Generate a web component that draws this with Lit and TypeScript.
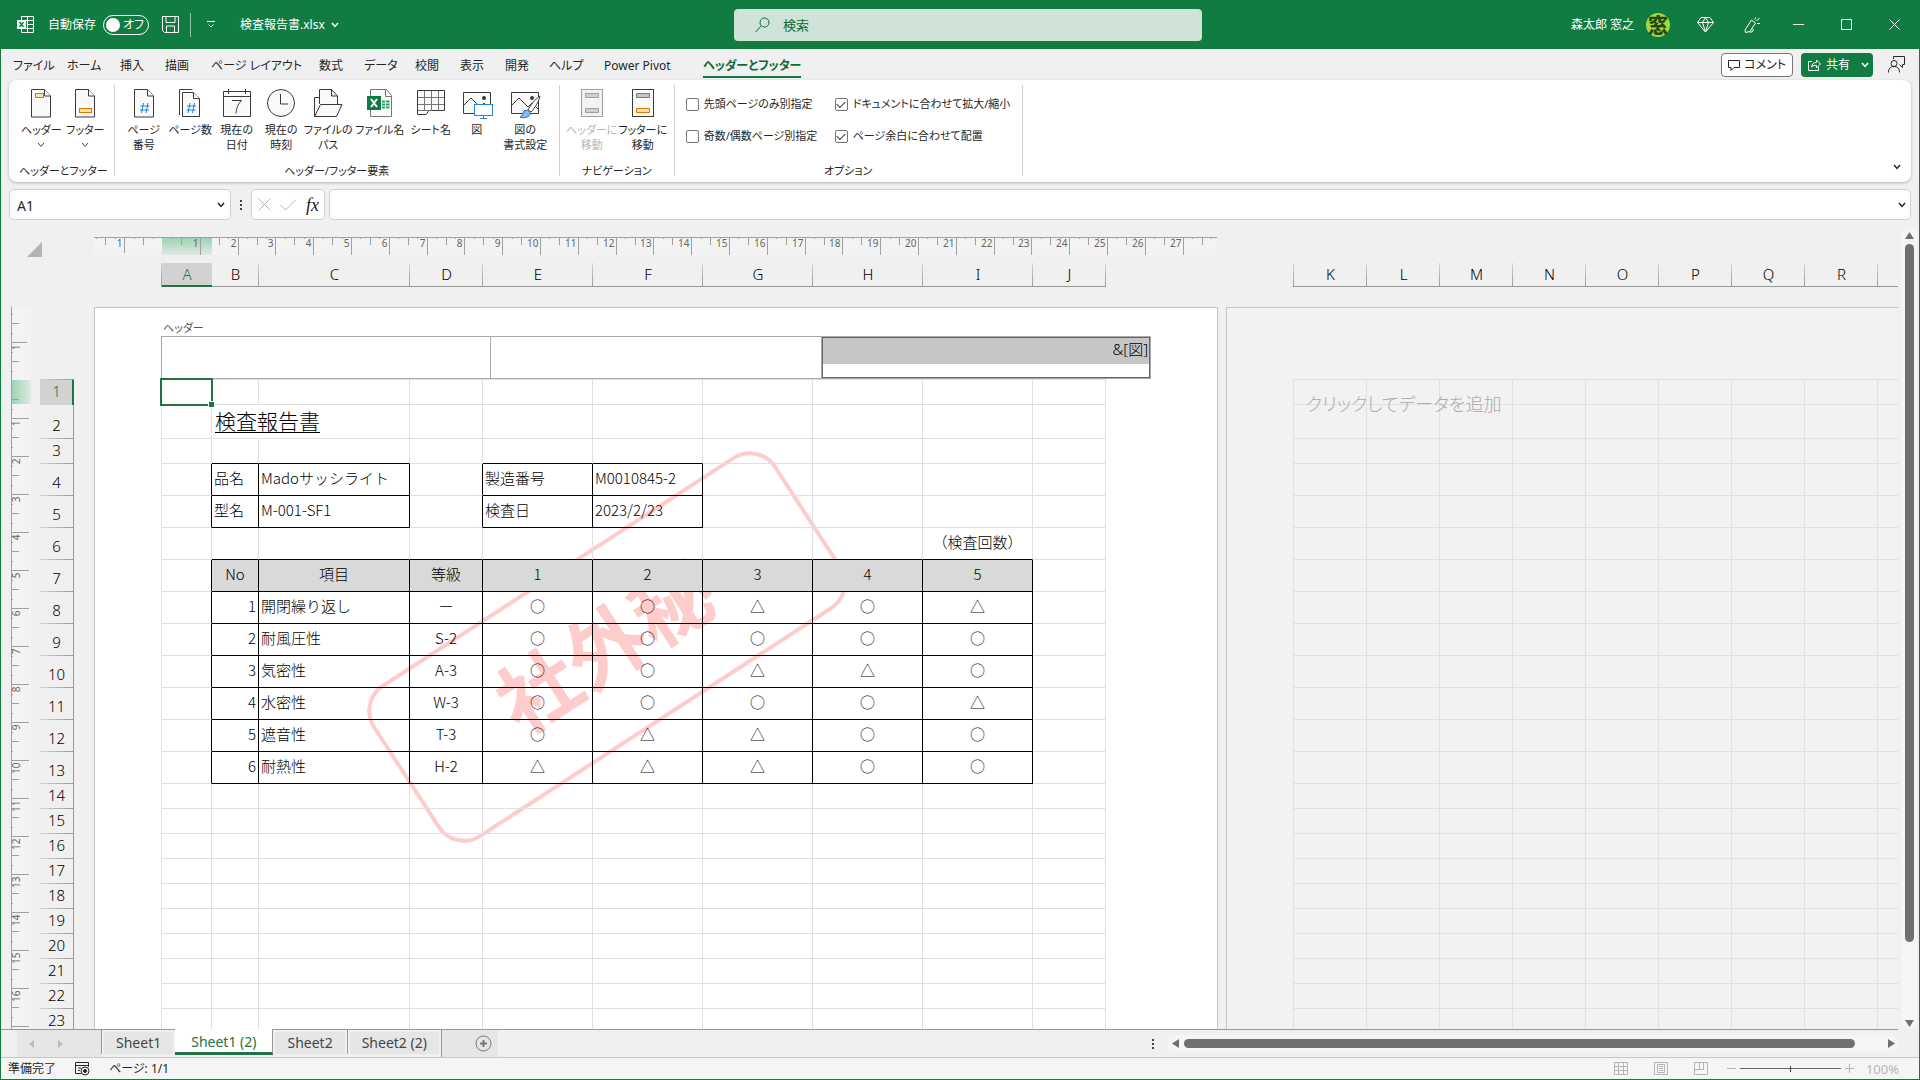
import { LitElement, html, svg, css, nothing } from "lit";
import { customElement, property } from "lit/decorators.js";
import { classMap } from "lit/directives/class-map.js";

type Cell = { text: string; align?: "center" | "right"; title?: boolean };

const COLS: [string, number][] = [
  ["A", 50], ["B", 47], ["C", 151], ["D", 73], ["E", 110],
  ["F", 110], ["G", 110], ["H", 110], ["I", 110], ["J", 73],
];
const NEXT_COLS = ["K", "L", "M", "N", "O", "P", "Q", "R", "S"];
const ROWS = Array.from({ length: 23 }, (_, i) => i + 1);
const rowClass = (r: number) => (r === 2 ? "r34" : r >= 4 && r <= 13 ? "r32" : "r25");

const CELLS: Record<string, Cell> = {
  B2: { text: "検査報告書", title: true },
  B4: { text: "品名" }, C4: { text: "Madoサッシライト" },
  B5: { text: "型名" }, C5: { text: "M-001-SF1" },
  E4: { text: "製造番号" }, F4: { text: "M0010845-2" },
  E5: { text: "検査日" }, F5: { text: "2023/2/23" },
  I6: { text: "（検査回数）", align: "center" },
};
["No", "項目", "等級", "1", "2", "3", "4", "5"].forEach((text, i) => {
  CELLS["BCDEFGHI"[i] + "7"] = { text, align: "center" };
});
const RESULTS: [string, string, string][] = [
  ["開閉繰り返し", "ー", "○○△○△"],
  ["耐風圧性", "S-2", "○○○○○"],
  ["気密性", "A-3", "○○△△○"],
  ["水密性", "W-3", "○○○○△"],
  ["遮音性", "T-3", "○△△○○"],
  ["耐熱性", "H-2", "△△△○○"],
];
RESULTS.forEach(([name, grade, marks], i) => {
  const r = 8 + i;
  CELLS["B" + r] = { text: String(i + 1), align: "right" };
  CELLS["C" + r] = { text: name };
  CELLS["D" + r] = { text: grade, align: "center" };
  [...marks].forEach((m, j) => (CELLS["EFGHI"[j] + r] = { text: m, align: "center" }));
});

const boxed = (c: number, r: number) =>
  ((r === 4 || r === 5) && (c === 1 || c === 2 || c === 4 || c === 5)) ||
  (r >= 7 && r <= 13 && c >= 1 && c <= 8);

const chevron = html`<svg class="chev" width="8" height="6" viewBox="0 0 8 6"><path d="M1 1l3 3.4L7 1" /></svg>`;

const page = svg`<path d="M1.5 .5h13l6 6.500v21h-19z" fill="#fafafa" stroke="#3b3a39"/><path d="M14.500 .5v6.500h6" fill="#fff" stroke="#3b3a39"/>`;
const picture = svg`<path d="M1.500 3.500h27v21h-27z" fill="#fafafa" stroke="#3b3a39"/><path d="M2 16l7-7 9 9 4-4 6 6" fill="none" stroke="#3b3a39"/><circle cx="22" cy="9" r="2" fill="#3b3a39"/>`;

const ICONS: Record<string, unknown> = {
  header: svg`<g transform="translate(4 0)">${page}<rect x="5.500" y="4.500" width="8" height="4" fill="#fce4a8" stroke="#e07400"/></g>`,
  footer: svg`<g transform="translate(4 0)">${page}<rect x="5.500" y="19.500" width="12" height="4" fill="#fce4a8" stroke="#e07400"/></g>`,
  pageNumber: svg`<g transform="translate(4 0)">${page}<path d="M10.500 14l-2 10M15 14l-2 10M7.500 17h9M7 21h9" stroke="#1e88d2" fill="none"/></g>`,
  pageCount: svg`<path d="M4.500 26V.5h13" fill="none" stroke="#3b3a39"/><path d="M7.500 3.500h11l6 6v18h-17z" fill="#fafafa" stroke="#3b3a39"/><path d="M18.500 3.500v6h6" fill="#fff" stroke="#3b3a39"/><path d="M15 14l-2 10M19.500 14l-2 10M12 17h9M11.500 21h9" stroke="#1e88d2" fill="none"/>`,
  date: svg`<path d="M1.500 2.500h27v25h-27zM1.500 7.500h27M6.500 0v5M23.500 0v5" fill="#fafafa" stroke="#3b3a39"/><path d="M10 11.500h9.500c-4 4-5 8-5.500 13" fill="none" stroke="#3b3a39"/>`,
  time: svg`<circle cx="15" cy="14" r="13.500" fill="#fafafa" stroke="#3b3a39"/><path d="M14.500 5v10H22" fill="none" stroke="#3b3a39"/>`,
  path: svg`<path d="M6.500 15V.5h12l6 6.500v9" fill="#fafafa" stroke="#3b3a39"/><path d="M18.500 .5V7h6" fill="none" stroke="#3b3a39"/><path d="M6 8.500H1.500v19l6-12h21.500l-5.500 12h-22" fill="#fafafa" stroke="#3b3a39"/>`,
  fileName: svg`<path d="M5.500 .5h16l5 6v21h-21z" fill="#fafafa" stroke="#797774"/><path d="M20.500 .5v7h6" fill="none" stroke="#797774"/><rect x="2" y="7" width="14" height="14" fill="#107c41"/><path d="M6 10l6 8M12 10l-6 8" stroke="#fff" stroke-width="2"/><path d="M17 12.500h3M21 12.500h3.500M17 15.500h3M21 15.500h3.500M17 18.500h3M21 18.500h3.500" stroke="#21a366" stroke-width="2"/>`,
  sheetName: svg`<path d="M1.500 1.500h27v20H13l-3 4h-8.500z" fill="#fafafa" stroke="#3b3a39"/><path d="M8.500 2v20M15.500 2v20M22.500 2v20M2 8.500h26M2 15.500h26M2 21.500h12" stroke="#797774"/>`,
  picture: svg`${picture}<rect x="12.500" y="15.500" width="18" height="11" fill="#fff" stroke="#1e88d2"/><path d="M21.500 27v2.500M18 29.500h7" stroke="#1e88d2"/>`,
  formatPicture: svg`${picture}<path d="M30 7c-5 3-10 10-12 14l3 2c4-4 8-11 9-16z" fill="#fff" stroke="#3b3a39"/><path d="M10 28c3 0 2-5 5-6.500 3-1 6 1.500 5 4-1.500 3-6 4-10 2.500z" fill="#83beec" stroke="#1e6fb8"/>`,
  goHeader: svg`<rect x="4.500" y=".5" width="21" height="27" fill="#f3f3f3" stroke="#a19f9d"/><path d="M8.500 4.500h13v4h-13zM8.500 19.500h13v4h-13z" fill="#d2d0ce" stroke="#a19f9d"/>`,
  goFooter: svg`<rect x="4.500" y=".5" width="21" height="27" fill="#fafafa" stroke="#3b3a39"/><path d="M8.500 4.500h13v4h-13z" fill="#c8c6c4" stroke="#797774"/><path d="M8.500 19.500h13v4h-13z" fill="#fce4a8" stroke="#e07400"/>`,
};

@customElement("ribbon-button")
class RibbonButton extends LitElement {
  @property() icon = "";
  @property() label = "";
  @property({ type: Boolean }) menu = false;
  @property({ type: Boolean }) disabled = false;

  static styles = css`
    :host { display: block; flex: none; }
    .btn {
      width: 100%; padding: 0; border: 0; background: none; color: #262626;
      font: inherit; font-feature-settings: inherit; line-height: 15px;
      display: flex; flex-direction: column; align-items: center;
    }
    .btn:disabled { color: #b5b5b5; }
    .icon { width: 32px; height: 32px; margin-bottom: 1px; }
    .label { white-space: pre; text-align: center; }
    .chev { margin-top: 5px; fill: none; stroke: #444; }
  `;

  render() {
    return html`<button class="btn" ?disabled=${this.disabled}>
      <svg class="icon" viewBox="-1 0 32 32">${ICONS[this.icon]}</svg>
      <span class="label">${this.label}</span>
      ${this.menu ? chevron : nothing}
    </button>`;
  }
}

@customElement("cm-ruler")
class CmRuler extends LitElement {
  @property({ type: Boolean, reflect: true }) vertical = false;
  @property({ type: Number }) length = 0;
  @property({ type: Number }) zero = 0;
  @property({ type: Number }) unit = 378;
  @property({ type: Number }) selected = 0;

  static styles = css`
    :host { display: block; flex: none; }
    .ruler { display: block; overflow: visible; }
    .num { font: 10px "Noto Sans", sans-serif; fill: #666; text-anchor: end; }
    .tick { stroke: #a0a0a0; shape-rendering: crispEdges; }
  `;

  render() {
    const v = this.vertical;
    const line = (p: number, a: number, b: number) =>
      v ? svg`<path class="tick" d="M${a} ${p}H${b}"/>` : svg`<path class="tick" d="M${p} ${a}V${b}"/>`;
    const marks: unknown[] = [];
    for (let q = -8; q < 120; q++) {
      const p = this.zero + Math.round((q * this.unit) / 40) + 0.5;
      if (p < 1 || p > this.length || q === 0) continue;
      if (q % 4 === 0) {
        const n = Math.abs(q / 4);
        marks.push(line(p, 1, q < 0 ? 16 : 18));
        if (v && p + 14 > this.length) continue;
        marks.push(v
          ? svg`<text class="num" transform="translate(9 ${p + 2}) rotate(-90)">${n}</text>`
          : svg`<text class="num" x=${p - 2} y="10">${n}</text>`);
      } else if (q % 2 === 0) marks.push(line(p, 1, 8));
      else marks.push(line(p, 1, 2));
    }
    const w = v ? 20 : this.length;
    const h = v ? this.length : 18;
    return html`<svg class="ruler" width=${w} height=${h} viewBox="0 0 ${w} ${h}">
      <defs><linearGradient id="sel" x2=${v ? 1 : 0} y2=${v ? 0 : 1}>
        <stop offset="0" stop-color="#97d3b1"/><stop offset="1" stop-color="#e2e8e4"/>
      </linearGradient></defs>
      <rect width=${w} height=${h} fill="#f3f3f3"/>
      ${v
        ? svg`<rect y=${this.zero} width="20" height=${this.selected} fill="url(#sel)"/><path class="tick" d="M.5 0V${h}"/>`
        : svg`<rect x=${this.zero} width=${this.selected} height="18" fill="url(#sel)"/><path class="tick" d="M0 .5H${w}"/>`}
      ${marks}
    </svg>`;
  }
}

const TABS: [string, number][] = [
  ["ファイル", 54], ["ホーム", 53], ["挿入", 45], ["描画", 46], ["ページ レイアウト", 108],
  ["数式", 45], ["データ", 51], ["校閲", 45], ["表示", 45], ["開発", 44], ["ヘルプ", 55],
  ["Power Pivot", 99], ["ヘッダーとフッター", 92],
];

type Tool = { icon: string; label: string; w: number; menu?: boolean; disabled?: boolean };
const GROUPS: { name: string; tools: Tool[] }[] = [
  { name: "ヘッダーとフッター", tools: [
    { icon: "header", label: "ヘッダー", w: 44, menu: true },
    { icon: "footer", label: "フッター", w: 44, menu: true },
  ] },
  { name: "ヘッダー/フッター要素", tools: [
    { icon: "pageNumber", label: "ページ\n番号", w: 46 },
    { icon: "pageCount", label: "ページ数", w: 47 },
    { icon: "date", label: "現在の\n日付", w: 46 },
    { icon: "time", label: "現在の\n時刻", w: 43 },
    { icon: "path", label: "ファイルの\nパス", w: 51 },
    { icon: "fileName", label: "ファイル名", w: 52 },
    { icon: "sheetName", label: "シート名", w: 50 },
    { icon: "picture", label: "図", w: 42 },
    { icon: "formatPicture", label: "図の\n書式設定", w: 55 },
  ] },
  { name: "ナビゲーション", tools: [
    { icon: "goHeader", label: "ヘッダーに\n移動", w: 52, disabled: true },
    { icon: "goFooter", label: "フッターに\n移動", w: 50 },
  ] },
];

const OPTIONS: [string, boolean][] = [
  ["先頭ページのみ別指定", false],
  ["ドキュメントに合わせて拡大/縮小", true],
  ["奇数/偶数ページ別指定", false],
  ["ページ余白に合わせて配置", true],
];

const SHEETS = ["Sheet1", "Sheet1 (2)", "Sheet2", "Sheet2 (2)"];

@customElement("app-root")
class AppRoot extends LitElement {
  static styles = css`
    * { box-sizing: border-box; }
    :host {
      display: flex; flex-direction: column; height: 100vh; box-sizing: border-box;
      border: solid #107c41; border-width: 0 1px 1px; background: #f0f0f0; overflow: hidden;
      font: 12px/16px "Noto Sans", "Noto Sans CJK JP", sans-serif; color: #262626;
      font-feature-settings: "palt"; white-space: nowrap;
    }
    button { font: inherit; font-feature-settings: inherit; color: inherit; border: 0; background: none; padding: 0; }
    input { font: inherit; color: inherit; }
    svg { display: block; flex: none; fill: none; stroke: currentColor; }
    .chev { stroke-width: 1.5; }

    .title { height: 49px; flex: none; padding-left: 16px; background: #107c41; color: #fff; display: grid; grid-template-columns: 1fr 468px 1fr; align-items: center; }
    .title-left { display: flex; align-items: center; }
    .autosave { display: flex; align-items: center; gap: 7px; margin: 0 13px 0 14px; }
    .switch { width: 46px; height: 20px; border: 1px solid #fff; border-radius: 10px; padding: 0 4px 0 2px; display: flex; align-items: center; justify-content: space-between; }
    .knob { width: 14px; height: 14px; border-radius: 50%; background: #fff; }
    .vsep { width: 1px; height: 24px; background: #8ec5a5; margin: 0 16px 0 11px; }
    .file { display: flex; align-items: center; gap: 6px; margin-left: 25px; }
    .search { height: 32px; border-radius: 4px; background: #cfe3d8; color: #0e6b38; display: flex; align-items: center; gap: 13px; padding-left: 21px; }
    .search input { flex: 1; min-width: 0; border: 0; outline: 0; background: none; font-size: 13px; padding: 0; }
    .search input::placeholder { color: #0e6b38; opacity: 1; }
    .title-right { display: flex; align-items: center; justify-content: flex-end; padding-right: 19px; }
    .user { display: flex; align-items: center; gap: 12px; margin-right: 27px; }
    .avatar { width: 24px; height: 24px; border-radius: 50%; background: #a5d63f; color: #1f4a12; font: 900 20px/23px "Noto Sans CJK JP", sans-serif; text-align: center; }
    .sys { display: flex; align-items: center; gap: 30px; }
    .win { display: flex; align-items: center; gap: 37px; margin-left: 32px; }

    .tabs { height: 31px; flex: none; display: flex; align-items: center; padding: 0 14px 0 12px; }
    .tab { text-align: left; height: 31px; flex: none; overflow: visible; padding-top: 3px; }
    .tab.on { color: #0e6b38; font-weight: 700; }
    .tab.on span { display: block; width: max-content; padding: 2px 0; border-bottom: 2px solid #107c41; margin-top: 2px; }
    .actions { margin-left: auto; display: flex; align-items: center; gap: 8px; }
    .comment, .share { height: 24px; border-radius: 4px; display: flex; align-items: center; }
    .comment { border: 1px solid #767676; background: #fff; padding: 0 6px; gap: 4px; }
    .share { background: #107c41; color: #fff; padding: 0 4px 0 7px; gap: 5px; }
    .share .chev { margin-left: 6px; }
    .person { margin-left: 7px; }

    .ribbon { flex: none; height: 102px; margin: 0 8px; background: #fff; border-radius: 8px; box-shadow: 0 1px 3px #0004; display: flex; padding: 5px 0; font-size: 11px; position: relative; }
    .group { display: flex; flex-direction: column; justify-content: space-between; align-items: center; border-right: 1px solid #d0d0d0; padding: 4px 6px 0; height: 91px; }
    .group:first-child { padding: 4px 6px 0 10px; }
    .tools { display: flex; }
    .gname { line-height: 16px; margin-bottom: -3px; }
    .opts { display: grid; grid-template-columns: 149px 181px; row-gap: 16px; padding: 7px 0 0 5px; }
    .opt { display: flex; align-items: center; gap: 5px; height: 16px; }
    .opt input { appearance: none; width: 13px; height: 13px; margin: 0; border: 1px solid #767676; border-radius: 2px; background: #fff; display: grid; place-items: center; }
    .opt input:checked::before { content: ""; width: 7px; height: 4px; border: solid #333; border-width: 0 0 1px 1px; transform: rotate(-45deg); margin-top: -2px; }
    .collapse { margin: auto 10px 7px auto; }

    .formula { flex: none; display: flex; align-items: center; height: 31px; margin: 7px 8px 0; }
    .field { height: 31px; background: #fff; border: 1px solid #d0d0d0; border-radius: 4px; display: flex; align-items: center; }
    .field input { flex: 1; min-width: 0; border: 0; outline: 0; background: none; padding: 2px 0 0 7px; font-size: 14px; }
    .name { width: 222px; padding-right: 5px; }
    .dots { margin: 0 9px; fill: #444; stroke: none; }
    .fx { width: 74px; margin-right: 4px; padding: 0 5px 0 6px; justify-content: space-between; color: #b5b5b5; }
    .fxg { font: italic 18px/20px "Liberation Serif", serif; color: #222; }
    .expr { flex: 1; padding-right: 4px; }

    .work { flex: 1; min-height: 0; display: flex; }
    .area { flex: 1; min-width: 0; display: flex; flex-direction: column; overflow: hidden; }
    .rulerow { height: 35px; padding-top: 17px; display: flex; flex: none; }
    .corner { width: 93px; padding: 5px 0 0 26px; flex: none; }
    .colrow { display: flex; flex: none; margin: 8px 0 20px 160px; font-size: 15px; color: #000; font-weight: 300; }
    .cols { display: flex; border-bottom: 1px solid #999; padding-left: 1px; background: linear-gradient(#d5d5d5, #999) left / 1px 100% no-repeat; flex: none; }
    .cols.next { flex: 1; min-width: 0; margin-left: 187px; overflow: hidden; }
    .col { flex: none; height: 23px; line-height: 22px; text-align: center; background: linear-gradient(#d5d5d5, #999) right / 1px 100% no-repeat; }
    .col.sel { background: #d2d2d2; color: #217346; box-shadow: inset 0 -1px #217346, 0 1px #217346; }
    .w73 { width: 73px; }
    .body { flex: 1; min-height: 0; display: flex; overflow: hidden; align-items: flex-start; }
    .vr { margin: 0 9px 0 10px; }
    .rows { flex: none; width: 34px; margin: 72px 20px 0 0; border-right: 1px solid #999; font-size: 15px; color: #000; font-weight: 300; padding: 1px 0 0; background: linear-gradient(90deg, #d5d5d5, #999) top / 100% 1px no-repeat; }
    .row { display: flex; align-items: flex-end; justify-content: center; line-height: 20px; padding-bottom: 4px; background: linear-gradient(90deg, #d5d5d5, #999) bottom / 100% 1px no-repeat; }
    .row.sel { background: #d2d2d2; color: #217346; box-shadow: inset -1px 0 #217346, 1px 0 #217346; }
    .r25 { height: 25px; } .r34 { height: 34px; } .r32 { height: 32px; }

    .page { position: relative; flex: none; background: #fff; border: 1px solid #c6c6c6; border-bottom: 0; padding: 0 66px; color: #000; }
    .hlabel { height: 28px; padding: 12px 0 0 2px; font-size: 11px; line-height: 16px; color: #555; }
    .hbox { display: grid; grid-template-columns: 329px 331px 329px; height: 43px; border: 1px solid #aaa; border-right: 0; position: relative; z-index: 1; }
    .hbox > * { border-right: 1px solid #aaa; }
    .hsel { margin-right: 1px; border: 1px solid #666; outline: 1px solid #aaa; font-size: 15px; font-weight: 300; line-height: 22px; text-align: right; }
    .hsel span { display: block; background: #c6c6c6; padding: 0 1px 4px 0; }
    .stamp { position: absolute; left: 270px; top: 141px; stroke: none; }
    .stamp text { font: 700 80px "Noto Sans CJK JP", sans-serif; fill: #fcc; text-anchor: middle; font-feature-settings: normal; }
    .grid { position: relative; width: 945px; border-collapse: separate; border-spacing: 0; table-layout: fixed; border: solid #e0e0e0; border-width: 1px 0 0 1px; font: 300 15px/20px "Noto Sans CJK JP", sans-serif; font-feature-settings: normal; }
    .grid td { padding: 0 2px 3px; border: solid #e0e0e0; border-width: 0 1px 1px 0; overflow: visible; vertical-align: middle; position: relative; }
    .grid td.br { border-right-color: #000; }
    .grid td.bb { border-bottom-color: #000; }
    .grid td.head { background: #d9d9d9; }
    .grid td.open { border-right-color: transparent; }
    .center { text-align: center; }
    .right { text-align: right; }
    .big { font-size: 21px; line-height: 24px; border-bottom: 1px solid #000; display: inline-block; position: relative; z-index: 1; margin-left: 1px; }
    .cursor { position: absolute; inset: -2px; border: 2px solid #217346; z-index: 2; }
    .cursor::after { content: ""; position: absolute; right: -3px; bottom: -3px; width: 5px; height: 5px; background: #217346; border: solid #fff; border-width: 1px 0 0 1px; box-sizing: content-box; }
    .page2 { position: relative; flex: 1; min-width: 0; margin-left: 8px; border: solid #c6c6c6; border-width: 1px 0 0 1px; background: #f2f2f2; padding: 71px 0 0 66px; overflow: hidden; }
    .page2 .grid { width: 658px; }
    .hint { position: absolute; left: 79px; top: 83px; font-size: 18px; line-height: 26px; color: #aaa; font-weight: 300; }

    .vscroll { flex: none; width: 16px; margin: 7px 2px 0 3px; border-radius: 8px; background: #f5f5f5; display: flex; flex-direction: column; align-items: center; padding: 5px 0 2px; gap: 5px; }
    .vthumb { width: 9px; flex: 0 1 698px; border-radius: 5px; background: #707070; }
    .vscroll svg:last-child { margin-top: auto; }
    .arrow { fill: #707070; stroke: none; }

    .sheets { flex: none; height: 28px; display: flex; border-top: 1px solid #999; margin-right: 21px; font-size: 14px; }
    .nav { width: 84px; margin-left: 16px; background: #e6e6e6; display: flex; align-items: center; gap: 24px; padding-left: 12px; }
    .nav svg { fill: #bbb; stroke: none; }
    .sheet { height: 24px; color: #444; padding: 1px 0 0; border-left: 1px solid #999; }
    .sheet span { display: block; line-height: 22px; background: #e6e6e6; padding: 0 12px; margin: 0 2px; }
    .sheet.on { margin: -1px 0 0; height: 26px; padding-top: 2px; background: #fff; color: #217346; border: solid #999; border-width: 0 1px 3px 0; border-bottom-color: #217346; }
    .sheet.on span { background: none; padding: 0 14px; line-height: 21px; }
    .sheet.after { border-left: 0; }
    .add { width: 57px; background: #e6e6e6; display: grid; place-items: center; padding-left: 28px; color: #777; border-left: 1px solid #999; }
    .hs { margin-left: auto; display: flex; align-items: center; flex: 0 1 755px; }
    .htrack { flex: 1; margin-left: 4px; height: 17px; border-radius: 8px; background: #f5f5f5; display: flex; align-items: center; padding: 0 3px 0 5px; gap: 5px; }
    .hthumb { height: 9px; flex: 0 1 671px; border-radius: 5px; background: #707070; }
    .htrack svg:last-child { margin-left: auto; }

    .status { flex: none; height: 22px; border-top: 1px solid #c6c6c6; background: #f5f5f5; display: flex; align-items: center; padding: 0 20px 0 7px; gap: 19px; }
    .views { margin-left: auto; display: flex; gap: 26px; color: #b5b5b5; }
    .zoom { display: flex; align-items: center; gap: 4px; color: #b5b5b5; }
    .zoom input { appearance: none; width: 101px; height: 16px; margin: 0; background: linear-gradient(#666, #666) center / 100% 1px no-repeat; }
    .zoom input::-webkit-slider-thumb { appearance: none; width: 1px; height: 6px; background: #444; }
    .pct { margin-left: 8px; font-size: 13px; }
  `;

  private cell(r: number, c: number) {
    const id = COLS[c][0] + r;
    const cell = CELLS[id];
    const cls = classMap({
      br: boxed(c, r) || boxed(c + 1, r),
      bb: boxed(c, r) || boxed(c, r + 1),
      head: r === 7 && c >= 1 && c <= 8,
      open: id === "B2",
      center: cell?.align === "center",
      right: cell?.align === "right",
    });
    return html`<td class=${cls}>${cell?.title ? html`<span class="big">${cell.text}</span>` : cell?.text ?? nothing}${id === "A1" ? html`<div class="cursor"></div>` : nothing}</td>`;
  }

  private titleBar() {
    return html`<header class="title">
      <div class="title-left">
        <svg width="17" height="17" viewBox="0 0 17 17"><path d="M4.500 4V.5h12v16h-12V13M10.500 .5v16M4.500 4.500h12M10 8.500h6.500M4.500 12.500h12"/><rect y="4" width="9" height="9" fill="#fff" stroke="none"/><path d="M2.500 6l4 5M6.500 6l-4 5" stroke="#107c41" stroke-width="1.500"/></svg>
        <div class="autosave"><span>自動保存</span><button class="switch" role="switch" aria-checked="false"><span class="knob"></span><span>オフ</span></button></div>
        <svg width="17" height="17" viewBox="0 0 17 17"><path d="M.5 .5h16v16h-14l-2-2zM4 .5v6h9v-6M4.500 16v-6h8v6"/></svg>
        <span class="vsep"></span>
        <svg width="8" height="8" viewBox="0 0 8 8"><path d="M0 .5h8M1.500 3.500L4 6l2.500-2.500"/></svg>
        <button class="file">検査報告書.xlsx ${chevron}</button>
      </div>
      <label class="search">
        <svg width="15" height="16" viewBox="0 0 15 16"><circle cx="9.500" cy="5.500" r="4.500"/><path d="M6 9L.7 15"/></svg>
        <input type="search" placeholder="検索" aria-label="検索">
      </label>
      <div class="title-right">
        <div class="user"><span>森太郎 窓之</span><span class="avatar">窓</span></div>
        <div class="sys">
          <svg width="17" height="16" viewBox="0 0 17 16"><path d="M4 .5h9l3.500 5L8.500 15 .5 5.500zM.5 5.500h16M5.500 5.500L8.500 15l3-9.500L8.500 .5z"/></svg>
          <svg width="17" height="16" viewBox="0 0 17 16"><path d="M1 13L7.500 3l4 3L6 14.500l-4.500 1zM8 11.500l1.500 1.500-1.500 2H5.500M11 2.500l.5-2M12.500 4l3-3M13 6.500h3"/></svg>
        </div>
        <div class="win">
          <svg width="11" height="11" viewBox="0 0 11 11"><path d="M0 5.500h11"/></svg>
          <svg width="11" height="11" viewBox="0 0 11 11"><path d="M.5 .5h10v10H.5z"/></svg>
          <svg width="11" height="11" viewBox="0 0 11 11"><path d="M.5 .5l10 10M10.500 .5l-10 10"/></svg>
        </div>
      </div>
    </header>`;
  }

  private ribbon() {
    return html`
      <nav class="tabs">
        ${TABS.map(([t, w], i) => html`<button class="tab ${i === 12 ? "on" : ""}" style="width:${w}px"><span>${t}</span></button>`)}
        <div class="actions">
          <button class="comment"><svg width="12" height="12" viewBox="0 0 12 12"><path d="M.5 1.500h11v7H6l-3 3v-3H.5z"/></svg>コメント</button>
          <button class="share"><svg width="13" height="13" viewBox="0 0 13 13"><path d="M4 3.500H.5v9h10V9M3.500 9c.5-3 2-4.500 5-4.500V2l4 4-4 4V7.500c-2 0-3.500 0-5 1.500z"/></svg>共有${chevron}</button>
          <svg class="person" width="17" height="17" viewBox="0 0 17 17"><circle cx="6" cy="7.500" r="3"/><path d="M.5 16.500c0-4 2-6 5.500-6s5.500 2 5.500 6M5.500 3V.5h11v8h-2v3l-3-3"/></svg>
        </div>
      </nav>
      <section class="ribbon">
        ${GROUPS.map((g) => html`<div class="group">
          <div class="tools">${g.tools.map((t) => html`<ribbon-button style="width:${t.w}px" .icon=${t.icon} .label=${t.label} ?menu=${t.menu} ?disabled=${t.disabled}></ribbon-button>`)}</div>
          <div class="gname">${g.name}</div>
        </div>`)}
        <div class="group">
          <div class="opts">${OPTIONS.map(([label, on]) => html`<label class="opt"><input type="checkbox" .checked=${on}>${label}</label>`)}</div>
          <div class="gname">オプション</div>
        </div>
        <button class="collapse" aria-label="リボンを折りたたむ">${chevron}</button>
      </section>`;
  }

  private formulaBar() {
    return html`<section class="formula">
      <div class="field name"><input aria-label="名前ボックス" .value=${"A1"}>${chevron}</div>
      <svg class="dots" width="2" height="10" viewBox="0 0 2 10"><path d="M0 0h2v2H0zM0 4h2v2H0zM0 8h2v2H0z"/></svg>
      <div class="field fx">
        <svg width="13" height="13" viewBox="0 0 13 13"><path d="M.5 .5l12 12M12.500 .5l-12 12"/></svg>
        <svg width="17" height="12" viewBox="0 0 17 12"><path d="M.5 6l5 5L16 .5"/></svg>
        <span class="fxg">fx</span>
      </div>
      <div class="field expr"><input aria-label="数式バー">${chevron}</div>
    </section>`;
  }

  private workspace() {
    return html`<main class="work">
      <div class="area">
        <div class="rulerow">
          <div class="corner"><svg width="15" height="15" viewBox="0 0 15 15"><path d="M15 0v15H0z" fill="#b2b2b2" stroke="none"/></svg></div>
          <cm-ruler length="1123" zero="68" selected="50"></cm-ruler>
        </div>
        <div class="colrow">
          <div class="cols">${COLS.map(([n, w], i) => html`<div class="col ${i === 0 ? "sel" : ""}" style="width:${w}px">${n}</div>`)}</div>
          <div class="cols next">${NEXT_COLS.map((n) => html`<div class="col w73">${n === "S" ? nothing : n}</div>`)}</div>
        </div>
        <div class="body">
          <cm-ruler class="vr" vertical length="722" zero="73" unit="380" selected="24"></cm-ruler>
          <div class="rows">${ROWS.map((r) => html`<div class="row ${rowClass(r)} ${r === 1 ? "sel" : ""}">${r}</div>`)}</div>
          <div class="page">
            <svg class="stamp" width="484" height="396" viewBox="0 0 484 396">
              <g transform="rotate(-33 242 198)"><rect x="3" y="108.500" width="478" height="179" rx="30" fill="none" stroke="#fcc" stroke-width="4"/><text x="241" y="227">社外秘</text></g>
            </svg>
            <div class="hlabel">ヘッダー</div>
            <div class="hbox"><div></div><div></div><div class="hsel"><span>&amp;[図]</span></div></div>
            <table class="grid">
              <colgroup>${COLS.map(([, w]) => html`<col style="width:${w}px">`)}</colgroup>
              <tbody>${ROWS.map((r) => html`<tr class=${rowClass(r)}>${COLS.map((_, c) => this.cell(r, c))}</tr>`)}</tbody>
            </table>
          </div>
          <div class="page2">
            <table class="grid"><tbody>${ROWS.map((r) => html`<tr class=${rowClass(r)}>${NEXT_COLS.map(() => html`<td></td>`)}</tr>`)}</tbody></table>
            <div class="hint">クリックしてデータを追加</div>
          </div>
        </div>
      </div>
      <div class="vscroll">
        <svg class="arrow" width="9" height="7" viewBox="0 0 9 7"><path d="M4.500 0L9 7H0z"/></svg>
        <div class="vthumb"></div>
        <svg class="arrow" width="9" height="7" viewBox="0 0 9 7"><path d="M4.500 7L9 0H0z"/></svg>
      </div>
    </main>`;
  }

  render() {
    return html`${this.titleBar()}${this.ribbon()}${this.formulaBar()}${this.workspace()}
      <div class="sheets">
        <div class="nav">
          <svg width="5" height="8" viewBox="0 0 5 8"><path d="M5 0v8L0 4z"/></svg>
          <svg width="5" height="8" viewBox="0 0 5 8"><path d="M0 0v8l5-4z"/></svg>
        </div>
        ${SHEETS.map((s, i) => html`<button class="sheet ${i === 1 ? "on" : i === 2 ? "after" : ""}"><span>${s}</span></button>`)}
        <button class="add" aria-label="新しいシート"><svg width="17" height="17" viewBox="0 0 17 17"><circle cx="8.500" cy="8.500" r="7.500"/><path d="M8.500 5v7M5 8.500h7" stroke-width="2"/></svg></button>
        <div class="hs">
          <svg class="dots" width="2" height="10" viewBox="0 0 2 10"><path d="M0 0h2v2H0zM0 4h2v2H0zM0 8h2v2H0z"/></svg>
          <div class="htrack">
            <svg class="arrow" width="7" height="9" viewBox="0 0 7 9"><path d="M0 4.500L7 0v9z"/></svg>
            <div class="hthumb"></div>
            <svg class="arrow" width="7" height="9" viewBox="0 0 7 9"><path d="M7 4.500L0 0v9z"/></svg>
          </div>
        </div>
      </div>
      <footer class="status">
        <span>準備完了</span>
        <svg width="15" height="14" viewBox="0 0 15 14"><path d="M6 11.500H.5V.5h13V5M.5 3.500h13M3 6h3M3 8.500h2"/><circle cx="10" cy="9" r="4"/><circle cx="10" cy="9" r="1.500" fill="#262626"/></svg>
        <span>ページ: 1/1</span>
        <div class="views">
          <svg width="14" height="13" viewBox="0 0 14 13"><path d="M.5 .5h13v12H.5zM4.500 0v13M9.500 0v13M0 4.500h14M0 8.500h14"/></svg>
          <svg width="14" height="13" viewBox="0 0 14 13"><path d="M.5 .5h13v12H.5zM3.500 2.500h7v8h-7zM5 4.500h4M5 6.500h4M5 8.500h4"/></svg>
          <svg width="14" height="13" viewBox="0 0 14 13"><path d="M.5 .5h13v12H.5zM5.500 .5v7M9.500 .5v7h-9"/></svg>
        </div>
        <div class="zoom">
          <svg width="9" height="9" viewBox="0 0 9 9"><path d="M0 4.500h9"/></svg>
          <input type="range" min="0" max="200" .value=${"100"} aria-label="ズーム">
          <svg width="9" height="9" viewBox="0 0 9 9"><path d="M0 4.500h9M4.500 0v9"/></svg>
          <span class="pct">100%</span>
        </div>
      </footer>`;
  }
}
